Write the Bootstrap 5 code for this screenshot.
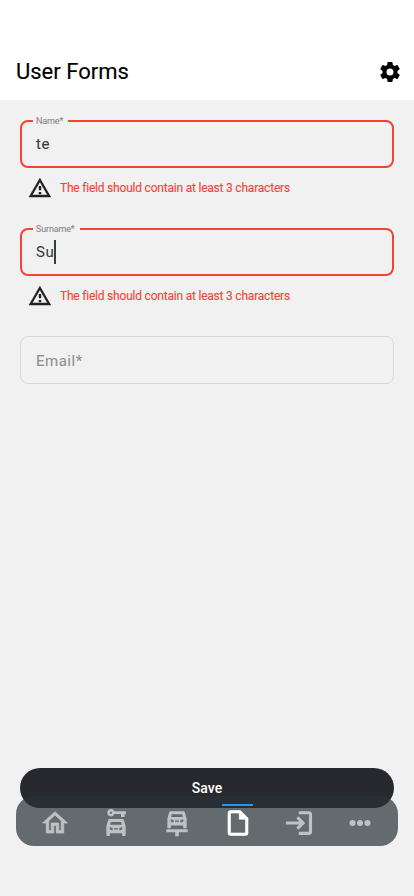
<!DOCTYPE html>
<html lang="en">
<head>
<meta charset="utf-8">
<meta name="viewport" content="width=device-width, initial-scale=1">
<title>User Forms</title>
<link href="https://cdn.jsdelivr.net/npm/bootstrap@5.3.0/dist/css/bootstrap.min.css" rel="stylesheet">
<style>
body{font-family:Roboto,sans-serif;background:#f1f1f1;overflow:hidden}
.app-bar{height:100px;padding:44px 12px 0 16px}
.app-title{font-size:22px;line-height:28px;font-weight:400;color:#000;-webkit-text-stroke:.15px #000}
.form-area{padding:20px 20px 0}
.field-box{height:48px;border:2px solid #f44336;border-radius:8px;padding:0 14px;font-size:15px;letter-spacing:.5px;color:#3c3c3e;-webkit-text-stroke:.12px currentColor}
.field-idle{border:1px solid #d9d9d9;padding:2px 15px 0;color:#919196}
.field-label{left:11px;top:-7px;height:12px;padding:0 5px 0 3px;background:#f1f1f1;font-size:9px;line-height:12px;letter-spacing:-.15px;color:#8b8b90}
.caret{width:2px;height:24px;margin-left:-.5px;background:#3c3c3e}
.field-error{height:40px;padding-left:8px;margin-bottom:20px;font-size:12px;letter-spacing:-.21px;color:#f44336;-webkit-text-stroke:.1px currentColor}
.save-btn{height:40px;background:#28292e;color:#fff;font-size:14px;font-weight:500;margin:0 20px}
.save-btn:hover{background:#28292e;color:#fff}
.tab-bar{height:50px;margin:-12px 16px 50px;padding:0 8px;border-radius:18px;background:rgba(38,50,56,.7);z-index:1}
.tab-item{width:61px;color:#bec2c4;padding-top:11.5px}
.tab-item.active{color:#fff}
.tab-mark{width:31px;height:2px;top:8px;left:15px;background:#2196f3}
</style>
<script src="https://cdn.jsdelivr.net/npm/bootstrap@5.3.0/dist/js/bootstrap.bundle.min.js"></script>
</head>
<body>
<div class="d-flex flex-column vh-100">
  <header class="app-bar bg-white d-flex align-items-center justify-content-between flex-shrink-0">
    <h1 class="app-title m-0">User Forms</h1>
    <svg width="24" height="24" viewBox="0 0 24 24" fill="#000"><path d="M12 15.5A3.5 3.5 0 0 1 8.5 12 3.5 3.5 0 0 1 12 8.5a3.5 3.5 0 0 1 3.5 3.5 3.5 3.5 0 0 1-3.5 3.5m7.43-2.53c.04-.32.07-.64.07-.97s-.03-.66-.07-1l2.11-1.63c.19-.15.24-.42.12-.64l-2-3.46c-.12-.22-.39-.31-.61-.22l-2.49 1c-.52-.39-1.06-.73-1.69-.98l-.37-2.65A.506.506 0 0 0 14 2h-4c-.25 0-.46.18-.5.42l-.37 2.65c-.63.25-1.17.59-1.69.98l-2.49-1c-.22-.09-.49 0-.61.22l-2 3.46c-.13.22-.07.49.12.64L4.57 11c-.04.34-.07.67-.07 1s.03.65.07.97l-2.11 1.66c-.19.15-.25.42-.12.64l2 3.46c.12.22.39.3.61.22l2.49-1.01c.52.4 1.06.74 1.69.99l.37 2.65c.04.24.25.42.5.42h4c.25 0 .46-.18.5-.42l.37-2.65c.63-.26 1.17-.59 1.69-.99l2.49 1.01c.22.08.49 0 .61-.22l2-3.46c.12-.22.07-.49-.12-.64z"/></svg>
  </header>

  <form class="form-area flex-grow-1">
    <div class="field-box position-relative d-flex align-items-center">
      <label class="field-label position-absolute">Name*</label>
      <span>te</span>
    </div>
    <div class="field-error d-flex align-items-center gap-2">
      <svg width="24" height="24" viewBox="0 0 24 24" fill="#202022" stroke="#202022" stroke-width=".5"><path d="M12 2L1 21h22M12 6l7.53 13H4.47M11 10v4h2v-4m-2 6v2h2v-2"/></svg>
      <span>The field should contain at least 3 characters</span>
    </div>
    <div class="field-box position-relative d-flex align-items-center">
      <label class="field-label position-absolute">Surname*</label>
      <span>Su</span><span class="caret"></span>
    </div>
    <div class="field-error d-flex align-items-center gap-2">
      <svg width="24" height="24" viewBox="0 0 24 24" fill="#202022" stroke="#202022" stroke-width=".5"><path d="M12 2L1 21h22M12 6l7.53 13H4.47M11 10v4h2v-4m-2 6v2h2v-2"/></svg>
      <span>The field should contain at least 3 characters</span>
    </div>
    <div class="field-box field-idle d-flex align-items-center"><span>Email*</span></div>
  </form>

  <button type="button" class="save-btn btn rounded-pill border-0 p-0 flex-shrink-0">Save</button>
  <nav class="tab-bar position-relative d-flex flex-shrink-0">
    <a class="tab-item"><svg class="d-block mx-auto" width="30" height="30" viewBox="0 0 24 24" fill="currentColor" stroke="currentColor" stroke-width=".6"><path d="M12 5.690l5 4.500V18h-2v-6H9v6H7v-7.810zM12 3L2 12h3v8h6v-6h2v6h6v-8h3z" fill-rule="evenodd"/></svg></a>
    <a class="tab-item"><svg class="d-block mx-auto" width="30" height="30" viewBox="0 0 24 24" fill="currentColor" fill-rule="evenodd"><path d="M8 .9a2.900 2.900 0 1 0 2.700 3.900H16v2.400h2.900V5h1V2.500h-9.200A2.900 2.900 0 0 0 8 .9m0 2a.9.900 0 1 1 0 1.800.9.900 0 0 1 0-1.800M7.100 8.800h9.800c.7 0 1.200.4 1.400 1l1.400 4.500v7.200c0 .5-.4.900-.9.900h-1a.9.900 0 0 1-.9-.9V20.200H7.100v1.300c0 .5-.4.900-.9.900h-1a.9.900 0 0 1-.9-.9v-7.200l1.400-4.500c.2-.6.700-1 1.400-1m.8 2.300L7.300 13.300h9.400l-.6-2.200zM7 15.100v2.100l2.300.6v-1.900zm3.400 1v1.100h3.200v-1.100zm6.600-1l-2.300.8v1.900l2.300-.6z"/></svg></a>
    <a class="tab-item"><svg class="d-block mx-auto" width="30" height="30" viewBox="0 0 24 24" fill="currentColor" fill-rule="evenodd"><path d="M7.100 2.600h9.800c.7 0 1.200.4 1.400 1l1.400 4.500v7.200c0 .5-.4.900-.9.900h-1a.9.900 0 0 1-.9-.9V14H7.100v1.300c0 .5-.4.900-.9.900h-1a.9.900 0 0 1-.9-.9V8.100l1.400-4.500c.2-.6.700-1 1.400-1m.8 2.300L7.300 7.100h9.400l-.6-2.200zM7 8.900V11l2.300.6V9.700zm3.400 1V11h3.200V9.900zm6.600-1l-2.300.8v1.900L17 11zM3.500 17h17v2.400h-7.100V22.500h-2.800v-3.100H3.500z"/></svg></a>
    <a class="tab-item active position-relative"><span class="tab-mark position-absolute"></span><svg class="d-block mx-auto" width="30" height="30" viewBox="0 0 24 24" fill="currentColor" stroke="currentColor" stroke-width=".5"><path d="M14 2H6a2 2 0 0 0-2 2v16a2 2 0 0 0 2 2h12a2 2 0 0 0 2-2V8l-6-6m4 18H6V4h7v5h5z"/></svg></a>
    <a class="tab-item"><svg class="d-block mx-auto" width="30" height="30" viewBox="0 0 24 24" fill="none" stroke="currentColor" stroke-width="2.500"><path d="M1.500 12h13.300M10.700 7.500l4.500 4.500-4.500 4.500M11.800 3.800H20a1.200 1.200 0 0 1 1.200 1.200v14.100a1.200 1.200 0 0 1-1.200 1.200h-8.200"/></svg></a>
    <a class="tab-item"><svg class="d-block mx-auto" width="30" height="30" viewBox="0 0 24 24" fill="currentColor"><circle cx="6" cy="12" r="2.400"/><circle cx="12" cy="12" r="2.400"/><circle cx="18" cy="12" r="2.400"/></svg></a>
  </nav>
</div>
</body>
</html>
